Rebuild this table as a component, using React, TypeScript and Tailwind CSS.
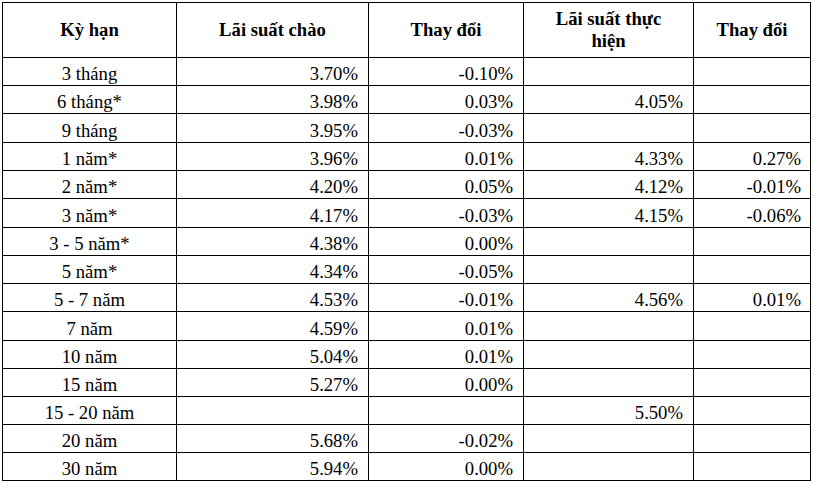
import React from "react";

type Row = [string, string, string, string, string];

const rows: Row[] = [
  ["3 tháng", "3.70%", "-0.10%", "", ""],
  ["6 tháng*", "3.98%", "0.03%", "4.05%", ""],
  ["9 tháng", "3.95%", "-0.03%", "", ""],
  ["1 năm*", "3.96%", "0.01%", "4.33%", "0.27%"],
  ["2 năm*", "4.20%", "0.05%", "4.12%", "-0.01%"],
  ["3 năm*", "4.17%", "-0.03%", "4.15%", "-0.06%"],
  ["3 - 5 năm*", "4.38%", "0.00%", "", ""],
  ["5 năm*", "4.34%", "-0.05%", "", ""],
  ["5 - 7 năm", "4.53%", "-0.01%", "4.56%", "0.01%"],
  ["7 năm", "4.59%", "0.01%", "", ""],
  ["10 năm", "5.04%", "0.01%", "", ""],
  ["15 năm", "5.27%", "0.00%", "", ""],
  ["15 - 20 năm", "", "", "5.50%", ""],
  ["20 năm", "5.68%", "-0.02%", "", ""],
  ["30 năm", "5.94%", "0.00%", "", ""],
];

const headers = ["Kỳ hạn", "Lãi suất chào", "Thay đổi", "Lãi suất thực hiện", "Thay đổi"];

const serif = "'Liberation Serif', Tinos, 'DejaVu Serif', 'Noto Serif', FreeSerif, Times, 'Times New Roman', serif";

export default function App() {
  return (
    <div className="w-[814px] h-[483px] bg-white pt-[2px] pl-[2px]">
      <div
        className="grid w-fit bg-black p-px gap-px text-black text-[18.67px] grid-cols-[173px_191px_154px_169px_116px] grid-rows-[54px_27px_27px_28px_27px_27px_28px_27px_27px_27px_28px_27px_27px_27px_27px_27px]"
        style={{ fontFamily: serif }}
      >
        {headers.map((h, i) => (
          <div key={"h" + i} className={"bg-white flex items-center justify-center text-center font-bold leading-[22px] " + (i === 3 ? "px-[26px]" : "px-[6px]")}>
            {h}
          </div>
        ))}
        {rows.map((r, ri) => (
          <React.Fragment key={ri}>
            <div className="bg-white flex items-end justify-center leading-[20px] pb-px">{r[0]}</div>
            <div className="bg-white flex items-end justify-end leading-[20px] pb-px pr-[10px]">{r[1]}</div>
            <div className="bg-white flex items-end justify-end leading-[20px] pb-px pr-[10px]">{r[2]}</div>
            <div className="bg-white flex items-end justify-end leading-[20px] pb-px pr-[10px]">{r[3]}</div>
            <div className="bg-white flex items-end justify-end leading-[20px] pb-px pr-[9px]">{r[4]}</div>
          </React.Fragment>
        ))}
      </div>
    </div>
  );
}
